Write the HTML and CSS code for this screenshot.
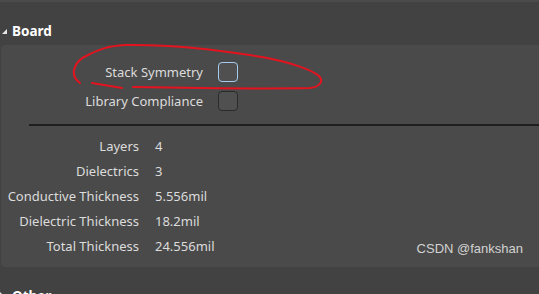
FILE: index.html
```html
<!DOCTYPE html>
<html>
<head>
<meta charset="utf-8" />
<title>Board</title>
<link rel="stylesheet" href="styles.css">
</head>
<body>
<div class="topline"></div>
<div class="head"><span class="tri-down"></span>Board</div>
<div class="panel">
	<div class="checks">
		<span class="lbl">Stack Symmetry</span><span class="box focus"></span>
		<span class="lbl">Library Compliance</span><span class="box"></span>
	</div>
	<div class="sep"></div>
	<div class="props">
		<span class="lbl">Layers</span><span class="val">4</span>
		<span class="lbl">Dielectrics</span><span class="val">3</span>
		<span class="lbl">Conductive Thickness</span><span class="val">5.556mil</span>
		<span class="lbl">Dielectric Thickness</span><span class="val">18.2mil</span>
		<span class="lbl">Total Thickness</span><span class="val">24.556mil</span>
	</div>
	<div class="watermark">CSDN @fankshan</div>
</div>
<div class="head"><span class="tri-right"></span>Other</div>

<svg class="scribble" width="539" height="294" viewBox="0 0 539 294">
	<path d="M92 83 L122 88" />
	<path d="M80 83 C70 76 72 62 88 55 C100 49 108 46 125 45 C170 44 220 50 262 57 C290 62 312 70 319 76 C324 81 320 87 310 88 C260 89 190 88 133 87" />
</svg>
</body>
</html>
```

FILE: styles.css
```css
*{margin:0;padding:0;box-sizing:border-box;}
body{background:#424242;font-family:"Noto Sans","Open Sans",sans-serif;color:#dcdcdc;font-size:13px;width:539px;height:294px;overflow:hidden;position:relative;}
.topline{height:2px;background:#4b4b4b;}
.head{height:43px;padding:20px 0 0 12px;line-height:18px;font-weight:bold;color:#fff;font-size:13.5px;position:relative;}
.tri-down{position:absolute;left:2px;top:27px;width:0;height:0;border-left:5px solid transparent;border-bottom:5px solid #e6e6e6;}
.tri-right{position:absolute;left:0;top:25px;width:0;height:0;border-top:4px solid transparent;border-bottom:4px solid transparent;border-left:4px solid #e6e6e6;}
.panel{margin-left:1px;background:#4a4a4a;border-radius:4px 0 0 4px;padding:17px 0 8px 0;height:222px;}
.checks{display:grid;grid-template-columns:202px 20px;column-gap:15px;row-gap:9px;align-items:center;}
.checks .lbl{text-align:right;line-height:20px;}
.box{width:20px;height:20px;border:1px solid #2a2a2a;border-radius:4px;background:#505050;}
.box.focus{border-color:#a6cbee;}
.sep{height:2px;background:#1f1f1f;margin:13px 0 0 28px;}
.props{display:grid;grid-template-columns:138px auto;column-gap:16px;grid-auto-rows:25px;align-items:center;margin-top:7px;}
.props .lbl{text-align:right;}
.watermark{position:absolute;right:16px;top:241px;font-family:"Liberation Sans",Arial,sans-serif;font-size:13px;color:#d2d2d2;}
.scribble{position:absolute;left:0;top:0;pointer-events:none;}
.scribble path{fill:none;stroke:#e3131f;stroke-width:2;stroke-linecap:round;}
```
